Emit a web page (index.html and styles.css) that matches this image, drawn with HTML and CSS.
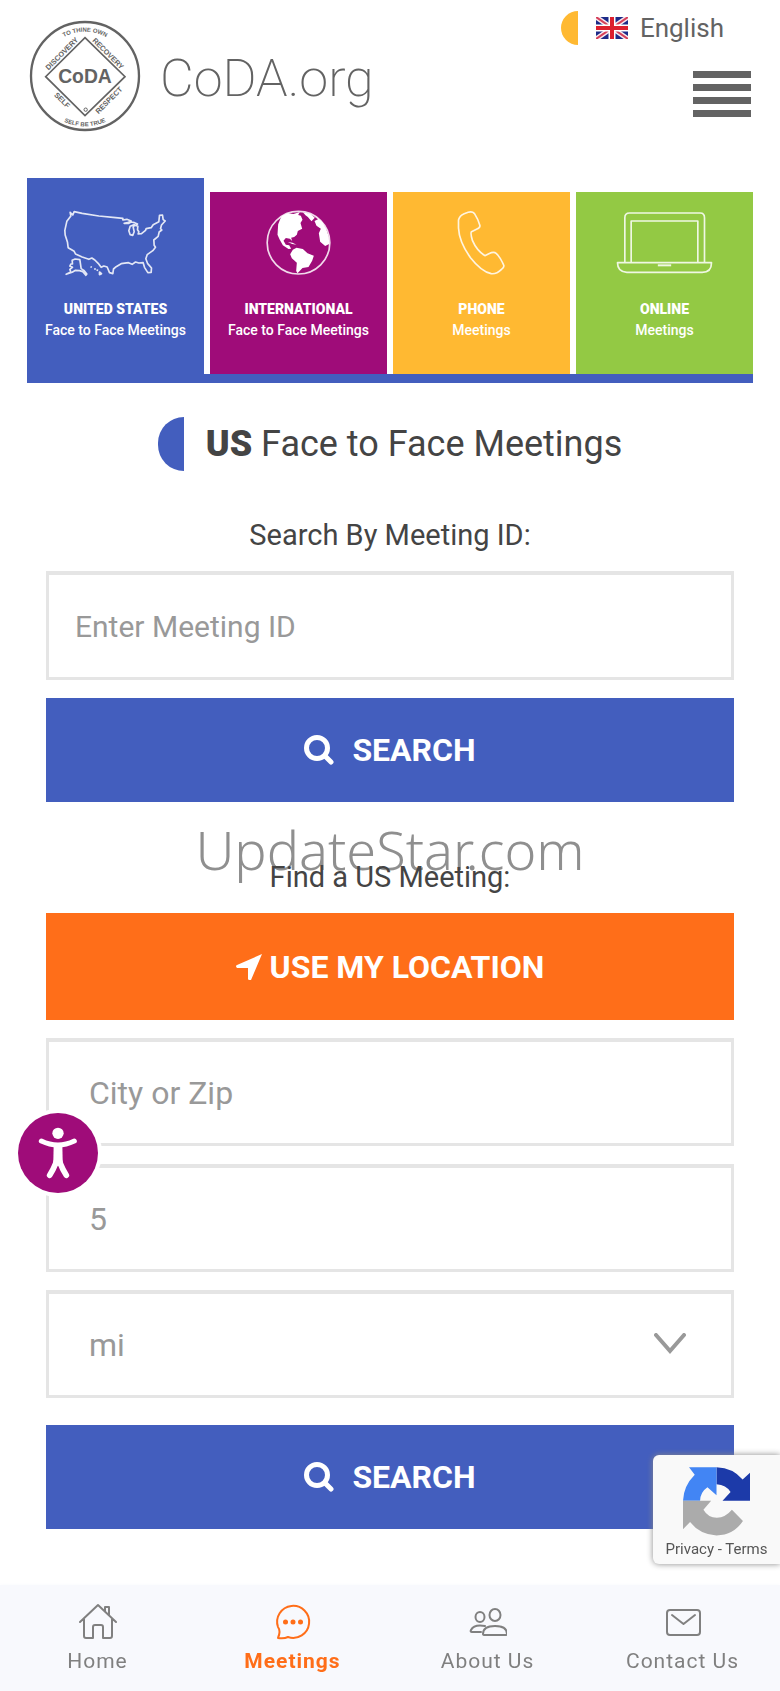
FILE: index.html
```html
<!DOCTYPE html>
<html lang="en">
<head>
  <meta charset="UTF-8">
  <meta name="viewport" content="width=device-width, initial-scale=1.0">
  <title>CoDA.org - Meetings</title>
  <link rel="stylesheet" href="styles.css">
</head>
<body>
  <header class="header">
    <a class="logo" href="#">
      <svg class="seal" viewBox="85 55 342 345" aria-hidden="true">
        <defs>
          <path id="arcTop" d="M122 230a134 134 0 0 1 268 0"/>
          <path id="arcBottom" d="M106 230a150 150 0 0 0 300 0"/>
        </defs>
        <circle cx="256" cy="229" r="162" fill="none" stroke="#636363" stroke-width="7"/>
        <path d="M256 114L376 231L256 348L138 231Z" fill="none" stroke="#636363" stroke-width="5"/>
        <circle cx="258" cy="330" r="5" fill="none" stroke="#636363" stroke-width="3"/>
        <text x="256" y="251" class="seal-name">CoDA</text>
        <text class="seal-arc"><textPath href="#arcTop" startOffset="50%">TO THINE OWN</textPath></text>
        <text class="seal-arc"><textPath href="#arcBottom" startOffset="50%">SELF BE TRUE</textPath></text>
        <text class="seal-side" transform="translate(192 167) rotate(-45)">DISCOVERY</text>
        <text class="seal-side" transform="translate(320 167) rotate(45)">RECOVERY</text>
        <text class="seal-side" transform="translate(182 307) rotate(45)">SELF</text>
        <text class="seal-side" transform="translate(333 307) rotate(-45)">RESPECT</text>
      </svg>
      <span class="logo-text">CoDA.org</span>
    </a>
    <div class="header-right">
      <a class="language" href="#">
        <span class="half half-small"></span>
        <svg class="flag" viewBox="0 0 32 22" aria-hidden="true">
          <path fill="#1c2a88" d="M0 0h32v22H0z"/>
          <path stroke="#f6e8ee" stroke-width="5" d="M0 0l32 22M32 0L0 22"/>
          <path stroke="#d5405a" stroke-width="2" d="M0 0l32 22M32 0L0 22"/>
          <path stroke="#fff" stroke-width="7" d="M16 0v22M0 11h32"/>
          <path stroke="#dc1f2e" stroke-width="4" d="M16 0v22M0 11h32"/>
        </svg>
        English
      </a>
      <button class="menu" aria-label="Menu"><span></span><span></span><span></span><span></span></button>
    </div>
  </header>

  <nav class="tabs">
    <a class="tab tab-us active" href="#">
      <svg class="tab-icon" viewBox="190 145 320 210" aria-hidden="true">
        <path d="M214 158L222 166L226 156L250 161L300 169L350 174L372 176L372 181L384 179L397 184L386 189L376 191L390 191L397 187L407 189L416 193L412 198L405 195L394 200L390 213L394 225L402 227L406 216L403 202L408 196L417 200L416 210L420 216L418 223L428 222L440 212L442 207L457 204L463 195L480 186L482 167L491 166L493 180L499 184L488 196L485 207L489 211L481 217L478 230L465 241L466 257L470 263L462 273L445 285L441 297L446 311L458 325L457 338L447 339L437 323L433 309L420 310L410 307L400 314L389 309L367 312L352 321L344 328L342 342L332 339L325 322L315 319L307 323L298 311L288 301L279 295L270 299L250 292L230 283L226 275L208 264L206 248L199 226L198 212L204 185L216 169Z"/>
        <path d="M220 302L229 298L243 300L247 327L255 332L264 343L261 347L252 336L242 333L230 332L220 338L202 344L216 337L213 329L221 323L213 319L216 313L221 313ZM275 321L279 323M286 327L291 329M293 331L298 332M302 337L308 342L302 345Z"/>
      </svg>
      <strong>UNITED STATES</strong>
      <span>Face to Face Meetings</span>
    </a>
    <a class="tab tab-int" href="#">
      <svg class="tab-icon" viewBox="735 145 320 210" aria-hidden="true">
        <circle cx="895" cy="249" r="94"/>
        <path class="solid" d="M845 169L862 161L880 163L899 157L894 166L902 168L907 180L901 190L906 207L893 214L890 225L882 232L873 234L876 244L869 237L857 235L850 243L857 255L867 257L873 267L865 268L848 257L838 239L832 225L834 194L840 179ZM878 270L889 264L908 268L922 281L941 288L936 303L925 322L907 325L892 341L888 334L890 309L875 296L870 284ZM908 158L930 162L944 174L934 185L923 172L916 167ZM943 184L955 178L949 171L967 188L978 207L986 232L987 253L975 259L960 246L956 221L962 207L949 198ZM863 247L877 249L889 255L876 253Z"/>
      </svg>
      <strong>INTERNATIONAL</strong>
      <span>Face to Face Meetings</span>
    </a>
    <a class="tab tab-phone" href="#">
      <svg class="tab-icon" viewBox="143 145 320 210" aria-hidden="true">
        <path d="M234 181Q237 168 251 162L263 158Q275 154 282 162Q293 179 298 197Q300 204 288 209L273 216Q269 220 276 243Q289 273 313 288L325 282Q340 275 347 281Q359 292 369 315Q373 322 363 329Q348 344 332 342Q302 335 270 294Q236 247 234 205Z"/>
      </svg>
      <strong>PHONE</strong>
      <span>Meetings</span>
    </a>
    <a class="tab tab-online" href="#">
      <svg class="tab-icon" viewBox="693 145 320 210" aria-hidden="true">
        <path d="M734 308V174Q734 160 748 160H960Q973 160 973 174V308M753 308V184H953V308M712 309H994Q994 338 966 338H740Q712 336 712 309Z"/>
        <path stroke-width="6" d="M833 317H873"/>
      </svg>
      <strong>ONLINE</strong>
      <span>Meetings</span>
    </a>
  </nav>

  <main class="content">
    <h1><span class="half"></span><span><b>US</b> Face to Face Meetings</span></h1>

    <form class="search-form">
      <label class="form-title" for="meetingId">Search By Meeting ID:</label>
      <input class="field field-id" id="meetingId" type="text" placeholder="Enter Meeting ID">
      <button class="btn" type="button">
        <svg class="search-icon" viewBox="0 0 30 30" aria-hidden="true"><circle cx="13" cy="13" r="10.500"/><path d="M21 21l6 6"/></svg>
        SEARCH
      </button>
    </form>

    <form class="search-form">
      <div class="form-title find-title">
        <span class="watermark">UpdateStar.com</span>
        <span class="find-text">Find a US Meeting:</span>
      </div>
      <button class="btn btn-location" type="button">
        <svg class="location-icon" viewBox="0 0 26 26" aria-hidden="true"><path d="M26 0L15 26Q13 27 12 25L12 14L1 14Q-1 12 1 11Z"/></svg>
        USE MY LOCATION
      </button>
      <input class="field" type="text" placeholder="City or Zip" aria-label="City or Zip">
      <input class="field" type="text" value="5" aria-label="Distance">
      <div class="select-wrap">
        <select class="field" aria-label="Distance unit">
          <option>mi</option>
          <option>km</option>
        </select>
        <svg class="chevron" viewBox="0 0 32 22" aria-hidden="true"><path d="M2 2l14 16L30 2"/></svg>
      </div>
      <button class="btn btn-last" type="button">
        <svg class="search-icon" viewBox="0 0 30 30" aria-hidden="true"><circle cx="13" cy="13" r="10.500"/><path d="M21 21l6 6"/></svg>
        SEARCH
      </button>
    </form>
  </main>

  <button class="accessibility" aria-label="Accessibility">
    <svg viewBox="54 280 240 240" aria-hidden="true">
      <circle cx="174" cy="341" r="17" fill="#fff"/>
      <path d="M124 364Q174 388 223 364" fill="none" stroke="#fff" stroke-width="15" stroke-linecap="round"/>
      <path d="M174 400Q172 430 149 467M174 400Q176 430 199 467" fill="none" stroke="#fff" stroke-width="17" stroke-linecap="round"/>
      <path d="M161 376H187L188 425L174 440L160 425Z" fill="#fff"/>
    </svg>
  </button>

  <div class="recaptcha">
    <svg viewBox="366 558 206 208" aria-hidden="true">
      <path fill="#1c3aa9" d="M469 561Q519 563 547 598L569 578V661H487L511 635Q498 614 469 612Z"/>
      <path fill="#4285f4" d="M469 561V645L442 621Q421 635 420 661H369Q371 617 404 584L387 561Z"/>
      <path fill="#ababab" d="M369 661H453L430 688Q444 712 470 712Q496 711 515 688L548 722Q520 764 469 765Q420 763 390 725L369 746Z"/>
    </svg>
    <div><a href="#">Privacy</a> - <a href="#">Terms</a></div>
  </div>

  <nav class="bottom-nav">
    <a href="#">
      <svg viewBox="0 0 38 38" aria-hidden="true"><path d="M1 19L19 2L37 19M5 16V33Q5 35 7 35H14V24Q14 22 16 22H22Q24 22 24 24V35H31Q33 35 33 33V16M26 8V4H30V12"/></svg>
      Home
    </a>
    <a class="active" href="#">
      <svg viewBox="0 0 38 38" aria-hidden="true"><path d="M4 35Q7 28 4 24A16 16 0 1 1 14 34Q10 36 4 35Z"/><path class="dots" d="M11.500 19h.01M19 19h.01M26.500 19h.01"/></svg>
      Meetings
    </a>
    <a href="#">
      <svg viewBox="0 0 38 38" aria-hidden="true"><ellipse cx="26" cy="12" rx="5.500" ry="6"/><ellipse cx="11" cy="14" rx="4.500" ry="5"/><path d="M14 31Q14 23 26 23Q38 23 38 31Q38 32 36 32H16Q14 32 14 31ZM12 29H3Q1 29 2 27Q5 21 16 23"/></svg>
      About Us
    </a>
    <a href="#">
      <svg viewBox="0 0 38 38" aria-hidden="true"><rect x="3" y="7" width="33" height="25" rx="3"/><path d="M8 12L19.500 21L31 12"/></svg>
      Contact Us
    </a>
  </nav>
</body>
</html>
```

FILE: styles.css
```css
* {
  margin: 0;
  padding: 0;
  box-sizing: border-box;
}
body {
  background-color: #fff;
  color: #444;
  font-family: Roboto, sans-serif;
  padding-bottom: 110px;
}
a {
  color: inherit;
  text-decoration: none;
}
.header {
  display: flex;
  justify-content: space-between;
  padding: 10px 28px 0;
  height: 178px;
}
.logo {
  display: flex;
  align-items: flex-start;
  gap: 18px;
  padding-top: 8px;
  color: #636363;
}
.seal {
  width: 114px;
  height: 115px;
}
.seal text {
  fill: #636363;
  font-family: "Liberation Sans", Arial, sans-serif;
  text-anchor: middle;
}
.seal-name {
  font-size: 58px;
  font-weight: bold;
}
.seal .seal-arc {
  font-size: 18px;
  font-weight: bold;
}
.seal .seal-side {
  font-size: 22px;
  font-weight: bold;
}
.logo-text {
  font-size: 52px;
  font-weight: 200;
  line-height: 64px;
  margin-top: 29px;
}
.header-right {
  display: flex;
  flex-direction: column;
  align-items: flex-end;
  gap: 25px;
}
.language {
  display: flex;
  align-items: center;
  color: #636363;
  font-size: 26px;
  line-height: 36px;
  margin-right: 28px;
}
.half {
  width: 26px;
  height: 54px;
  background: #435ebe;
  border-radius: 27px 0 0 27px;
}
.half-small {
  width: 17px;
  height: 34px;
  background: #ffb932;
}
.flag {
  width: 32px;
  height: 22px;
  margin: 0 12px 0 18px;
}
.menu {
  display: flex;
  flex-direction: column;
  gap: 6px;
  width: 60px;
  padding: 0 1px;
  border: none;
  background: none;
  cursor: pointer;
}
.menu span {
  height: 7px;
  background: #636363;
}
.tabs {
  display: flex;
  align-items: flex-end;
  gap: 6px;
  margin: 0 27px;
  border-bottom: 9px solid #435ebe;
}
.tab {
  flex: 1;
  display: flex;
  flex-direction: column;
  align-items: center;
  height: 182px;
  padding-top: 16px;
  color: #fff;
  font-size: 14px;
  line-height: 21px;
}
.tab.active {
  height: 196px;
  padding-top: 30px;
}
.tab-us { background: #435ebe; }
.tab-int { background: #9f0c79; }
.tab-phone { background: #ffb932; }
.tab-online { background: #93c944; }
.tab strong {
  font-weight: 900;
}
.tab span {
  font-weight: 500;
}
.tab-icon {
  width: 107px;
  height: 70px;
  margin-bottom: 21px;
  fill: none;
  stroke: #fff;
  stroke-opacity: 0.85;
  stroke-width: 5;
  stroke-linejoin: round;
}
.tab-icon .solid {
  fill: #fff;
  stroke: none;
}
.content {
  padding: 34px 46px 55px;
}
h1 {
  display: flex;
  justify-content: center;
  align-items: center;
  gap: 22px;
  height: 54px;
  font-size: 36px;
  font-weight: 400;
}
h1 b {
  font-weight: 900;
}
.search-form {
  display: flex;
  flex-direction: column;
  gap: 18px;
}
.form-title {
  margin-top: 46px;
  font-size: 29px;
  line-height: 36px;
  text-align: center;
}
.field {
  width: 100%;
  height: 108px;
  padding: 0 40px;
  border: 3px solid #e5e5e5;
  border-top-width: 4px;
  background: #fff;
  color: #999;
  font-family: inherit;
  font-size: 32px;
}
.field-id {
  height: 109px;
  padding: 0 26px;
  font-size: 30px;
}
.field::placeholder {
  color: #999;
}
.btn {
  display: flex;
  justify-content: center;
  align-items: center;
  gap: 18px;
  height: 104px;
  border: none;
  background: #435ebe;
  color: #fff;
  font-family: inherit;
  font-size: 32px;
  font-weight: 700;
  cursor: pointer;
}
.btn-location {
  gap: 8px;
  height: 107px;
  background: #ff6e19;
}
.btn-last {
  margin-top: 9px;
}
.search-icon {
  width: 30px;
  height: 30px;
  fill: none;
  stroke: #fff;
  stroke-width: 5;
  stroke-linecap: round;
}
.location-icon {
  width: 26px;
  height: 26px;
  fill: #fff;
}
.find-title {
  position: relative;
  margin-top: 57px;
}
.find-text {
  position: relative;
}
.watermark {
  position: absolute;
  left: 0;
  right: 0;
  bottom: 14px;
  color: #8f8f8f;
  font-family: "Noto Sans", "Open Sans", sans-serif;
  font-size: 54px;
  font-weight: 300;
  line-height: 64px;
}
.select-wrap {
  position: relative;
}
.select-wrap select {
  display: block;
  appearance: none;
}
.chevron {
  position: absolute;
  right: 48px;
  top: 43px;
  width: 32px;
  height: 22px;
  fill: none;
  stroke: #999;
  stroke-width: 4;
  stroke-linecap: round;
  pointer-events: none;
}
/* floating widgets */
.accessibility {
  position: fixed;
  left: 18px;
  bottom: 498px;
  width: 80px;
  height: 80px;
  border: none;
  border-radius: 50%;
  background: #9f0c79;
  box-shadow: 0 0 0 4px #fff;
  cursor: pointer;
}
.accessibility svg {
  display: block;
}
.recaptcha {
  position: fixed;
  right: 0;
  bottom: 127px;
  width: 127px;
  height: 109px;
  padding-top: 11px;
  border-radius: 6px 0 0 6px;
  background: #f9f9f9;
  box-shadow: 0 0 6px #888;
  color: #555;
  font-size: 15px;
  text-align: center;
}
.recaptcha svg {
  width: 69px;
  height: 70px;
}
.bottom-nav {
  position: fixed;
  left: 0;
  right: 0;
  bottom: 0;
  display: flex;
  height: 106px;
  padding-top: 18px;
  background: #f8f9fd;
  box-shadow: 0 0 4px #f8f9fd;
}
.bottom-nav a {
  flex: 1;
  display: flex;
  flex-direction: column;
  align-items: center;
  gap: 6px;
  color: #808080;
  font-size: 21px;
  line-height: 28px;
  letter-spacing: 1px;
}
.bottom-nav svg {
  width: 38px;
  height: 38px;
  fill: none;
  stroke: currentColor;
  stroke-width: 2;
  stroke-linecap: round;
  stroke-linejoin: round;
}
.bottom-nav .dots {
  stroke-width: 5;
}
.bottom-nav .active {
  color: #ff6e19;
  font-weight: 700;
}
```
